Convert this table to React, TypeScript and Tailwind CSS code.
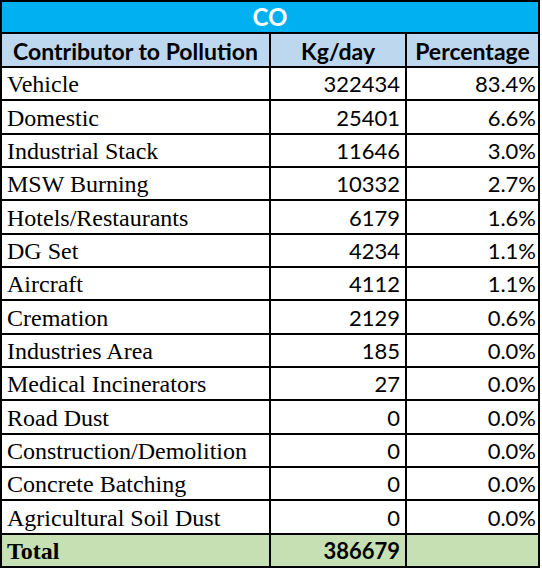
const ROWS: [string, string, string][] = [
  ["Vehicle", "322434", "83.4%"],
  ["Domestic", "25401", "6.6%"],
  ["Industrial Stack", "11646", "3.0%"],
  ["MSW Burning", "10332", "2.7%"],
  ["Hotels/Restaurants", "6179", "1.6%"],
  ["DG Set", "4234", "1.1%"],
  ["Aircraft", "4112", "1.1%"],
  ["Cremation", "2129", "0.6%"],
  ["Industries Area", "185", "0.0%"],
  ["Medical Incinerators", "27", "0.0%"],
  ["Road Dust", "0", "0.0%"],
  ["Construction/Demolition", "0", "0.0%"],
  ["Concrete Batching", "0", "0.0%"],
  ["Agricultural Soil Dust", "0", "0.0%"],
];

const head = "bg-[#bdd7ee] flex items-end justify-center pb-[3px] text-[23px] leading-none font-bold font-[Lato,sans-serif]";

export default function App() {
  return (
    <div className="bg-white w-[542px] h-[569px]">
      <div className="grid w-[540px] h-[568px] bg-black p-[2px] gap-[2px] grid-cols-[267px_134px_131px] grid-rows-[30px_32px_repeat(15,1fr)] text-black">
        {/* titel */}
        <div className="col-span-3 bg-[#00b0f0] text-white flex items-end justify-center pb-[3px] text-[24px] leading-none font-bold font-[Lato,sans-serif]">
          CO
        </div>

        {/* kopregel */}
        <div className={head}>Contributor to Pollution</div>
        <div className={head}>Kg/day</div>
        <div className={head}>Percentage</div>

        {ROWS.map(([name, kg, pct]) => (
          <div key={name} className="contents">
            <div className="bg-white flex items-end pl-[5px] pb-[3px] text-[24px] leading-none [font-family:'Times_New_Roman',Tinos,'Liberation_Serif',Georgia,serif]">
              {name}
            </div>
            <div className="bg-white flex items-end justify-end pr-[5px] pb-[4px] text-[22px] leading-none font-[Lato,sans-serif]">
              {kg}
            </div>
            <div className="bg-white flex items-end justify-end pr-[2px] pb-[4px] text-[22px] leading-none font-[Lato,sans-serif]">
              {pct}
            </div>
          </div>
        ))}

        {/* totaal */}
        <div className="bg-[#c6e0b4] flex items-end pl-[5px] pb-[3px] text-[24px] leading-none font-bold [font-family:'Times_New_Roman',Tinos,'Liberation_Serif',Georgia,serif]">
          Total
        </div>
        <div className="bg-[#c6e0b4] flex items-end justify-end pr-[5px] pb-[4px] text-[22px] leading-none font-bold font-[Lato,sans-serif]">
          386679
        </div>
        <div className="bg-[#c6e0b4]" />
      </div>
    </div>
  );
}
